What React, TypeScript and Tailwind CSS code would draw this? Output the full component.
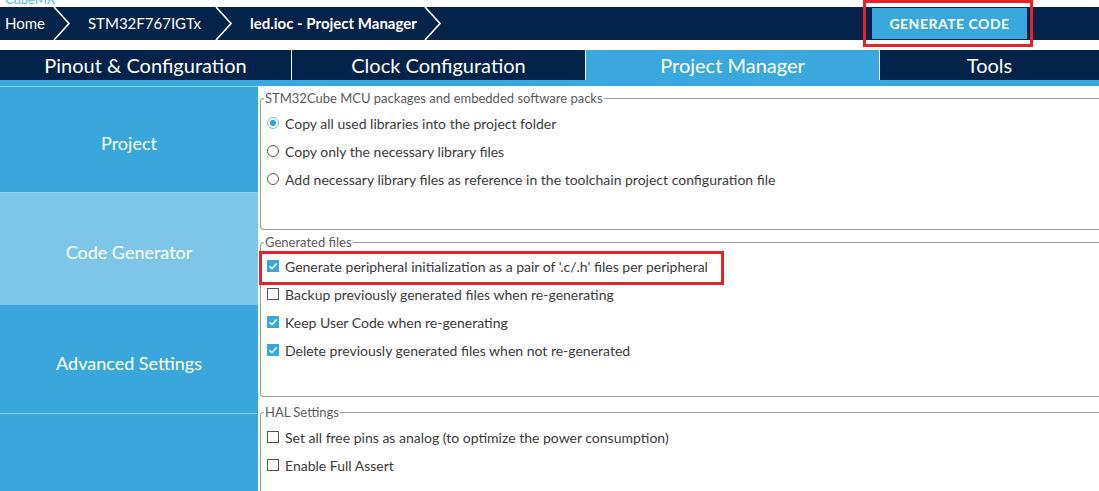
import React from "react";

const font = { fontFamily: "Lato, 'Open Sans', sans-serif" };

const Chevron: React.FC = () => (
    <svg width="18" height="33" viewBox="0 0 18 33" className="shrink-0">
        <polyline points="1,0 16,16.5 1,33" fill="none" stroke="white" strokeWidth="1.6" />
    </svg>
);

const Radio: React.FC<{ checked?: boolean }> = ({ checked }) => (
    <span
        className={
            "w-[12px] h-[12px] rounded-full border flex items-center justify-center shrink-0 bg-white " +
            (checked ? "border-[#6bbde6]" : "border-[#555]")
        }
    >
        {checked && <span className="w-[6px] h-[6px] rounded-full bg-[#2f9fd8]" />}
    </span>
);

const Check: React.FC<{ checked?: boolean }> = ({ checked }) =>
    checked ? (
        <span className="w-[12px] h-[12px] bg-[#3aa8dc] flex items-center justify-center shrink-0">
            <svg width="12" height="12" viewBox="0 0 12 12">
                <polyline points="2.5,6.2 5,8.7 9.6,3.4" fill="none" stroke="white" strokeWidth="1.5" />
            </svg>
        </span>
    ) : (
        <span className="w-[12px] h-[12px] border border-[#555] bg-white shrink-0" />
    );

const Row: React.FC<{ icon: React.ReactNode; label: string }> = ({ icon, label }) => (
    <div className="h-[28px] flex items-center gap-[6px] pl-[3px]">
        {icon}
        <span className="text-[14px] text-[#3a3a3a] whitespace-nowrap">{label}</span>
    </div>
);

const Group: React.FC<{ title: string; className?: string; children: React.ReactNode }> = ({ title, className, children }) => (
    <fieldset className={"border border-r-0 border-[#9a9a9a] rounded-l-[4px] pl-[3px] " + (className ?? "")}>
        <legend className="px-[1px] text-[13px] leading-[16px] text-[#5a5a5a]">{title}</legend>
        {children}
    </fieldset>
);

export default function App() {
    const tabs = ["Pinout & Configuration", "Clock Configuration", "Project Manager", "Tools"];

    return (
        <div className="w-[1099px] h-[491px] overflow-hidden bg-white relative" style={font}>
            {/* cut off title above breadcrumb */}
            <div className="h-[7px] overflow-hidden">
                <span className="block -mt-[10px] ml-[5px] text-[13px] text-[#55b8ea]">CubeMX</span>
            </div>

            {/* breadcrumb bar */}
            <div className="h-[33px] bg-[#03234b] flex items-center text-white">
                <span className="ml-[5px] text-[15px]">Home</span>
                <span className="ml-[8px]"><Chevron /></span>
                <span className="ml-[17px] text-[15px]">STM32F767IGTx</span>
                <span className="ml-[14px]"><Chevron /></span>
                <span className="ml-[17px] text-[15px] font-bold">led.ioc - Project Manager</span>
                <span className="ml-[7px]"><Chevron /></span>
                <button className="ml-auto mr-[72px] h-[31px] w-[155px] bg-[#3aa8dc] text-white text-[14px] font-bold tracking-[0.5px]">
                    GENERATE CODE
                </button>
            </div>
            <div className="absolute left-[863px] top-0 w-[170px] h-[47px] border-[3px] border-[#e8202a]" />

            <div className="h-[10px]" />

            {/* main tabs */}
            <div className="h-[30px] flex text-[20px] text-white">
                {tabs.map((t, i) => (
                    <div
                        key={t}
                        className={
                            "flex items-center justify-center " +
                            (i === 0 ? "w-[291px] " : "border-l border-white ") +
                            (i === 1 || i === 2 ? "w-[294px] " : "") +
                            (i === 3 ? "flex-1 " : "") +
                            (i === 2 ? "bg-[#3aa8dc]" : "bg-[#03234b]")
                        }
                    >
                        {t}
                    </div>
                ))}
            </div>
            <div className="h-[6px] bg-[#3aa8dc]" />

            <div className="flex h-[405px]">
                {/* sidebar */}
                <div className="w-[258px] bg-[#39a7db] border-t border-[#8ed0ef] text-white text-[18px] flex flex-col">
                    <div className="h-[106px] pt-[8px] flex items-center justify-center border-b border-[#8ed0ef]">Project</div>
                    <div className="h-[112px] pt-[6px] flex items-center justify-center bg-[#7ec6e9]">Code Generator</div>
                    <div className="h-[109px] pt-[8px] flex items-center justify-center border-b border-[#8ed0ef]">Advanced Settings</div>
                </div>

                {/* content */}
                <div className="flex-1 pl-[2px] relative">
                    <Group title="STM32Cube MCU packages and embedded software packs" className="mt-[4px] pt-[3px] pb-[36px]">
                        <Row icon={<Radio checked />} label="Copy all used libraries into the project folder" />
                        <Row icon={<Radio />} label="Copy only the necessary library files" />
                        <Row icon={<Radio />} label="Add necessary library files as reference in the toolchain project configuration file" />
                    </Group>

                    <Group title="Generated files" className="mt-[4px] pt-[2px] pb-[32px]">
                        <Row icon={<Check checked />} label="Generate peripheral initialization as a pair of '.c/.h' files per peripheral" />
                        <Row icon={<Check />} label="Backup previously generated files when re-generating" />
                        <Row icon={<Check checked />} label="Keep User Code when re-generating" />
                        <Row icon={<Check checked />} label="Delete previously generated files when not re-generated" />
                    </Group>

                    <Group title="HAL Settings" className="mt-[7px] pt-[3px] pb-[32px]">
                        <Row icon={<Check />} label="Set all free pins as analog (to optimize the power consumption)" />
                        <Row icon={<Check />} label="Enable Full Assert" />
                    </Group>

                    <div className="absolute left-[1px] top-[165px] w-[465px] h-[34px] border-[3px] border-[#e8202a]" />
                </div>
            </div>
        </div>
    );
}
